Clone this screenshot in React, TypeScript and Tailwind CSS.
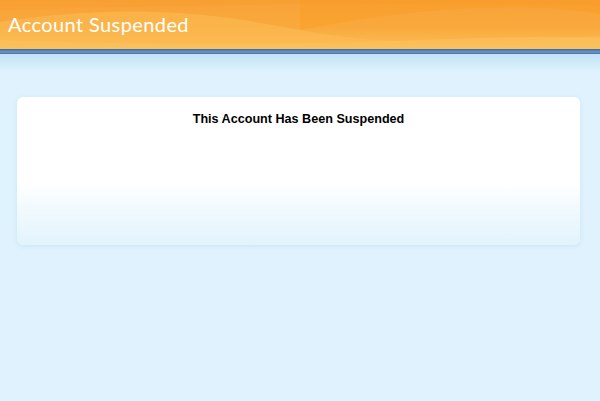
import React from "react";

export default function App() {
  return (
    <div className="w-[600px] h-[401px] bg-[#dff2fd] flex flex-col overflow-hidden">
      <div className="relative h-[49px] overflow-hidden bg-[linear-gradient(180deg,#f9a23a_0%,#f9a93c_55%,#fbbd55_100%)]">
        <svg className="absolute inset-0" width="600" height="49" viewBox="0 0 600 49" preserveAspectRatio="none">
          <path d="M0 22 C 80 10, 150 8, 230 18 C 300 28, 330 40, 420 42 C 500 44, 560 38, 600 36 L600 49 L0 49 Z" fill="#fbbe55" opacity="0.55" />
          <path d="M0 40 C 120 44, 260 46, 420 40 C 500 37, 560 36, 600 38 L600 49 L0 49 Z" fill="#fcc461" opacity="0.5" />
          <path d="M300 30 C 360 18, 420 10, 480 8 C 540 6, 580 10, 600 14 L600 0 L300 0 Z" fill="#f89a1e" opacity="0.35" />
          <path d="M0 0 L600 0 L600 6 C 400 2, 200 4, 0 10 Z" fill="#f89c2a" opacity="0.4" />
        </svg>
        <div className="relative pl-[8px] pt-[11px] text-white text-[20px] leading-[26px] tracking-[0.4px] font-['Lato','DejaVu_Sans',sans-serif]">
          Account Suspended
        </div>
      </div>
      <div className="h-[5px] bg-[linear-gradient(180deg,#3d6da4_0%,#5a86b8_40%,#6f98c4_60%,#406fa6_100%)]" />
      <div className="h-[18px] bg-[linear-gradient(180deg,#c3e2f5_0%,#dff2fd_100%)]" />
      <div className="px-[17px] pt-[25px]">
        <div className="h-[148px] w-[563px] rounded-[6px] bg-[linear-gradient(180deg,#ffffff_0%,#ffffff_58%,#f2fafe_75%,#e2f3fd_100%)] shadow-[0_1px_4px_rgba(170,210,235,0.4)] flex flex-col items-center">
          <div className="pt-[14px] text-[12.6px] leading-[16px] font-bold text-black font-['Liberation_Sans',Arial,sans-serif]">
            This Account Has Been Suspended
          </div>
        </div>
      </div>
    </div>
  );
}
